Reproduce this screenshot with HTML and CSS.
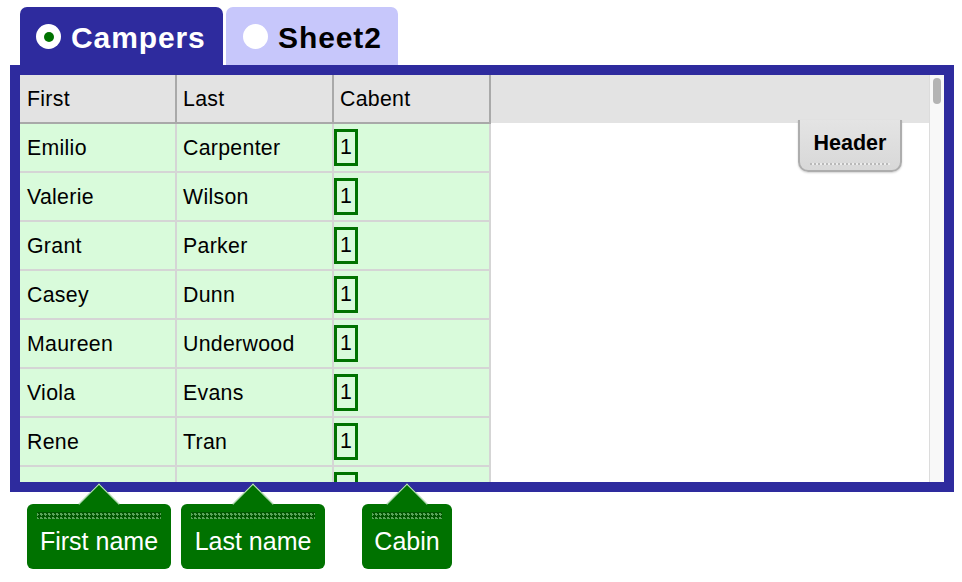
FILE: index.html
```html
<!DOCTYPE html>
<html>
<head>
<meta charset="utf-8">
<link rel="stylesheet" href="styles.css">
</head>
<body>
<div class="page">
  <div class="tabs">
    <div class="tab tab-active"><span class="radio radio-on"></span><span class="tab-label">Campers</span></div>
    <div class="tab tab-idle"><span class="radio"></span><span class="tab-label">Sheet2</span></div>
  </div>
  <div class="frame">
    <div class="sheet">
      <div class="row head">
        <div class="cell">First</div>
        <div class="cell">Last</div>
        <div class="cell">Cabent</div>
        <div class="fill"></div>
      </div>
      <div class="row"><div class="cell">Emilio</div><div class="cell">Carpenter</div><div class="cell cabin"><span class="num">1</span></div></div>
      <div class="row"><div class="cell">Valerie</div><div class="cell">Wilson</div><div class="cell cabin"><span class="num">1</span></div></div>
      <div class="row"><div class="cell">Grant</div><div class="cell">Parker</div><div class="cell cabin"><span class="num">1</span></div></div>
      <div class="row"><div class="cell">Casey</div><div class="cell">Dunn</div><div class="cell cabin"><span class="num">1</span></div></div>
      <div class="row"><div class="cell">Maureen</div><div class="cell">Underwood</div><div class="cell cabin"><span class="num">1</span></div></div>
      <div class="row"><div class="cell">Viola</div><div class="cell">Evans</div><div class="cell cabin"><span class="num">1</span></div></div>
      <div class="row"><div class="cell">Rene</div><div class="cell">Tran</div><div class="cell cabin"><span class="num">1</span></div></div>
      <div class="row faded"><div class="cell">Tamara</div><div class="cell">Miller</div><div class="cell cabin"><span class="num">1</span></div></div>
      <div class="header-btn">
        <div class="header-btn-text">Header</div>
        <div class="header-btn-line"></div>
      </div>
    </div>
    <div class="scrollbar"><div class="thumb"></div></div>
  </div>
  <div class="labels">
    <div class="label label-first"><div class="strip"></div><div class="label-text">First name</div></div>
    <div class="label label-last"><div class="strip"></div><div class="label-text">Last name</div></div>
    <div class="label label-cabin"><div class="strip"></div><div class="label-text">Cabin</div></div>
  </div>
</div>
</body>
</html>
```

FILE: styles.css
```css
html, body {
  margin: 0;
  padding: 0;
  background: #ffffff;
}

body {
  font-family: "Liberation Sans", Arial, Helvetica, sans-serif;
  color: #000;
}

.page {
  padding: 7px 0 0 10px;
}

/* Tabs */
.tabs {
  display: flex;
  gap: 3px;
  margin-left: 10px;
}

.tab {
  box-sizing: border-box;
  height: 58px;
  padding: 4px 0 0 16px;
  display: flex;
  align-items: center;
  gap: 10px;
  border-radius: 7px 7px 0 0;
  font-size: 30px;
  font-weight: bold;
  letter-spacing: 0.9px;
}

.tab-active {
  width: 203px;
  background: #2e2b9e;
  color: #ffffff;
}

.tab-idle {
  width: 172px;
  padding-left: 17px;
  background: #c7c7fb;
  color: #000;
}

.radio {
  width: 25px;
  height: 25px;
  border-radius: 50%;
  background: #ffffff;
  display: flex;
  align-items: center;
  justify-content: center;
  flex: none;
  margin-top: -3px;
}

.radio-on::after {
  content: "";
  width: 10px;
  height: 10px;
  border-radius: 50%;
  background: #007200;
}

.tab-label {
  line-height: 40px;
}

/* Frame */
.frame {
  box-sizing: border-box;
  width: 944px;
  height: 427px;
  border: 10px solid #2e2b9e;
  display: flex;
  background: #ffffff;
}

.sheet {
  flex: 1;
  position: relative;
  overflow: hidden;
}

.row {
  display: flex;
  height: 49px;
}

.cell {
  box-sizing: border-box;
  width: 157px;
  height: 49px;
  flex: none;
  display: flex;
  align-items: center;
  padding: 1px 0 0 6px;
  background: #d9fbdb;
  border-right: 2px solid #d5d5d5;
  border-bottom: 2px solid #d5d5d5;
  font-size: 21.3px;
  letter-spacing: 0.3px;
}

.row .cell:first-child {
  padding-left: 7px;
}

.head .cell {
  background: #e3e3e3;
  border-right-color: #a9a9a9;
  border-bottom-color: #a9a9a9;
}

.head .fill {
  flex: 1;
  height: 48px;
  background: #e3e3e3;
}

.cabin {
  padding: 0;
}

.num {
  box-sizing: border-box;
  width: 24px;
  height: 37px;
  border: 3px solid #007200;
  display: flex;
  align-items: center;
  justify-content: center;
  color: #000;
  letter-spacing: 0;
}

.faded .cell {
  color: #777;
}

/* Header overlay button */
.header-btn {
  position: absolute;
  left: 778px;
  top: 45px;
  box-sizing: border-box;
  width: 104px;
  height: 52px;
  border: 2px solid #adadad;
  border-top: none;
  border-radius: 0 0 10px 10px;
  background: linear-gradient(#e4e4e4, #d8d8d8);
  box-shadow: 0 1px 2px rgba(0, 0, 0, 0.18);
  text-align: center;
}

.header-btn-text {
  padding-top: 8px;
  line-height: 30px;
  font-size: 21.5px;
  font-weight: bold;
  color: #000;
}

.header-btn-line {
  width: 80px;
  height: 2px;
  margin: 5px auto 0;
  background: repeating-linear-gradient(90deg, #b9b9b9 0 2px, #ececec 2px 4px);
}

/* Scrollbar */
.scrollbar {
  box-sizing: border-box;
  width: 15px;
  border-left: 1px solid #dcdcdc;
  background: #f8f8f8;
  padding: 3px 0 0 3px;
}

.thumb {
  width: 8px;
  height: 26px;
  border-radius: 4px;
  background: #b4b4b4;
}

/* Bottom labels */
.labels {
  display: flex;
  margin-top: 12px;
  padding-left: 17px;
}

.label {
  position: relative;
  box-sizing: border-box;
  height: 65px;
  background: #007200;
  border-radius: 6px;
  color: #ffffff;
  text-align: center;
  padding-top: 8px;
}

.label::before {
  content: "";
  position: absolute;
  left: 50%;
  top: 0;
  box-sizing: border-box;
  width: 29px;
  height: 29px;
  background: #007200;
  border-top: 1px solid #c6e8c6;
  border-left: 1px solid #c6e8c6;
  transform: translate(-50%, -50%) rotate(45deg);
}

.label-first {
  width: 144px;
}

.label-last {
  width: 144px;
  margin-left: 10px;
}

.label-cabin {
  width: 90px;
  margin-left: 37px;
}

.strip {
  position: relative;
  height: 7px;
  margin: 0 10px;
  background: conic-gradient(from 45deg, #5aa55a 25%, #005600 0 50%, #5aa55a 0 75%, #005600 0) 0 0 / 4px 4px;
}

.label-text {
  position: relative;
  font-size: 25px;
  line-height: 44px;
}
```
